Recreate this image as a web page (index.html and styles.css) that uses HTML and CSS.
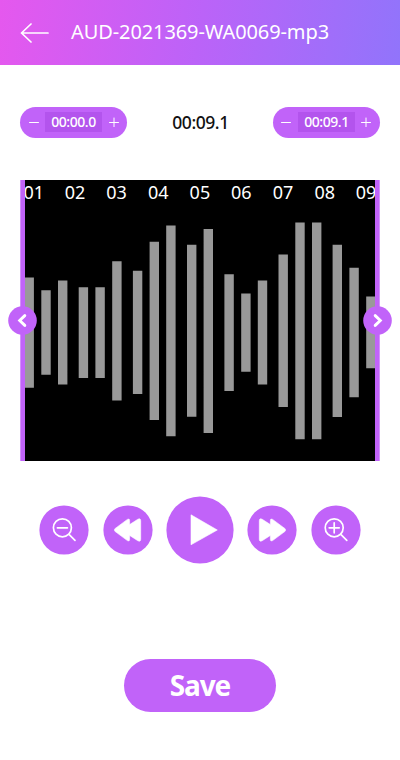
FILE: index.html
```html
<!DOCTYPE html>
<html lang="en">
<head>
<meta charset="utf-8">
<title>Audio trimmer</title>
<link rel="stylesheet" href="styles.css">
</head>
<body>
<header class="topbar">
  <svg class="back" viewBox="0 0 30 20" width="30" height="20"><path d="M28 10H1.5M11 1L1.5 10L11 19"/></svg>
  <h1 class="title">AUD-2021369-WA0069-mp3</h1>
</header>
<main>
  <section class="times">
    <div class="stepper">
      <svg class="sign" viewBox="0 0 10 10" width="10" height="10"><path d="M.5 5.5h9"/></svg>
      <span class="value">00:00.0</span>
      <svg class="sign" viewBox="0 0 10 10" width="10" height="10"><path d="M.5 5.5h9M5 1v9"/></svg>
    </div>
    <span class="duration">00:09.1</span>
    <div class="stepper">
      <svg class="sign" viewBox="0 0 10 10" width="10" height="10"><path d="M.5 5.5h9"/></svg>
      <span class="value">00:09.1</span>
      <svg class="sign" viewBox="0 0 10 10" width="10" height="10"><path d="M.5 5.5h9M5 1v9"/></svg>
    </div>
  </section>
  <section class="wave">
    <svg class="chart" viewBox="20 179.7 360 281.6" width="360" height="281.6">
      <path class="backdrop" d="M24 179.7h352v281.6h-352z"/>
      <g class="ticks">
        <text x="23.5" y="198.4" textLength="20.6" lengthAdjust="spacingAndGlyphs">01</text>
        <text x="64.8" y="198.4" textLength="20.6" lengthAdjust="spacingAndGlyphs">02</text>
        <text x="106.3" y="198.4" textLength="20.6" lengthAdjust="spacingAndGlyphs">03</text>
        <text x="148" y="198.4" textLength="20.6" lengthAdjust="spacingAndGlyphs">04</text>
        <text x="189.6" y="198.4" textLength="20.6" lengthAdjust="spacingAndGlyphs">05</text>
        <text x="231" y="198.4" textLength="20.6" lengthAdjust="spacingAndGlyphs">06</text>
        <text x="272.7" y="198.4" textLength="20.6" lengthAdjust="spacingAndGlyphs">07</text>
        <text x="314.4" y="198.4" textLength="20.6" lengthAdjust="spacingAndGlyphs">08</text>
        <text x="355.8" y="198.4" textLength="20.6" lengthAdjust="spacingAndGlyphs">09</text>
      </g>
      <path class="bars" d="M24.5 277.3h9.4v110.2h-9.4zM41.3 290h9.4v84.5h-9.4zM58 280.3h9.4v104h-9.4zM78.7 287h9.4v90.7h-9.4zM95.4 287h9.4v90.7h-9.4zM112.2 261h9.4v139.3h-9.4zM132.9 270.4h9.4v123.3h-9.4zM149.6 241.4h9.4v178.4h-9.4zM166.2 225.3h9.4v210.7h-9.4zM187 244.5h9.4v172h-9.4zM203.6 228.6h9.4v204.1h-9.4zM224.4 274h9.4v116.6h-9.4zM241.2 293.2h9.4v78.2h-9.4zM257.8 280.3h9.4v104h-9.4zM278.5 254.3h9.4v152.5h-9.4zM295.3 222.2h9.4v216.8h-9.4zM312 222.2h9.4v216.8h-9.4zM332.6 244.4h9.4v172.2h-9.4zM349.4 267.4h9.4v129.6h-9.4zM366.2 296.3h9.4v71.7h-9.4z"/>
      <path class="edge" d="M20.3 179.7h4.7v281.6h-4.7zM375 179.7h4.7v281.6h-4.7z"/>
    </svg>
    <svg class="handle start" viewBox="0 0 29 29" width="29" height="29"><circle cx="14.5" cy="14.5" r="14.3"/><path d="M16.8 9.6L11.7 14.5L16.8 19.4"/></svg>
    <svg class="handle end" viewBox="0 0 29 29" width="29" height="29"><circle cx="14.5" cy="14.5" r="14.3"/><path d="M12.2 9.6L17.3 14.5L12.2 19.4"/></svg>
  </section>
  <section class="controls">
    <svg class="control" viewBox="0 0 50 50" width="50" height="50"><circle class="disc" cx="25" cy="25" r="24.6"/><path class="line" d="M32.4 22.8a9 9 0 1 1-18 0a9 9 0 1 1 18 0zM18.4 22.8h10M30 29.4L36 35.3"/></svg>
    <svg class="control" viewBox="0 0 50 50" width="50" height="50"><circle class="disc" cx="25" cy="25" r="24.6"/><path class="solid" d="M11.9 26.3Q10.9 25 11.9 23.7L24.4 14.4Q26.6 13.2 26.6 15.4V19.6L34.9 14.2Q37.7 12.9 37.7 15.8V34.2Q37.7 37.1 34.9 35.8L26.6 30.4V34.6Q26.6 36.8 24.4 35.6Z"/></svg>
    <svg class="control" viewBox="0 0 68 68" width="68" height="68"><circle class="disc" cx="34" cy="34" r="33.6"/><path class="solid" d="M25 18.8L51.3 34L25 48.8Z"/></svg>
    <svg class="control" viewBox="0 0 50 50" width="50" height="50"><circle class="disc" cx="25" cy="25" r="24.6"/><path class="solid" d="M38.1 26.3Q39.1 25 38.1 23.7L25.6 14.4Q23.4 13.2 23.4 15.4V19.6L15.1 14.2Q12.3 12.9 12.3 15.8V34.2Q12.3 37.1 15.1 35.8L23.4 30.4V34.6Q23.4 36.8 25.6 35.6Z"/></svg>
    <svg class="control" viewBox="0 0 50 50" width="50" height="50"><circle class="disc" cx="25" cy="25" r="24.6"/><path class="line" d="M32.2 22.8a9 9 0 1 1-18 0a9 9 0 1 1 18 0zM18.2 22.8h10M23.2 17.8v10M29.8 29.4L35.8 35.3"/></svg>
  </section>
  <button class="save">Save</button>
</main>
</body>
</html>
```
FILE: styles.css
```css
* { box-sizing: border-box; }

body {
  margin: 0;
  width: 400px;
  height: 760px;
  background: #fff;
  font-family: "Noto Sans", sans-serif;
}

svg { display: block; flex: none; }

.topbar {
  display: flex;
  align-items: center;
  gap: 21px;
  height: 65.3px;
  padding-left: 20px;
  background: linear-gradient(98deg, #e558ee 0%, #bb63f8 50%, #9174fb 100%);
}

.back, .sign {
  fill: none;
  stroke: #fff;
  stroke-linecap: round;
  stroke-linejoin: round;
}
.back { stroke-width: 1.7; }
.sign { stroke-width: 1; }

.title {
  margin: 0 0 1px;
  color: #fff;
  font-size: 20px;
  font-weight: 400;
  line-height: 28px;
  letter-spacing: -0.1px;
  white-space: nowrap;
}

.times {
  display: flex;
  align-items: center;
  justify-content: space-between;
  margin: 41.4px 20px 0;
  height: 31.6px;
}

.stepper {
  display: flex;
  align-items: center;
  justify-content: space-between;
  width: 107px;
  height: 31.6px;
  padding: 0 8.5px;
  border-radius: 16px;
  background: #c163f9;
  color: #fff;
}

.value {
  width: 57px;
  height: 20px;
  background: #b354ed;
  font-size: 14px;
  font-weight: 500;
  line-height: 20px;
  letter-spacing: -0.45px;
  text-align: center;
}

.duration {
  padding-left: 1px;
  color: #111;
  font-size: 17.5px;
  font-weight: 500;
  line-height: 24px;
  letter-spacing: -0.45px;
}

.wave {
  position: relative;
  width: 360px;
  height: 281.6px;
  margin: 41.4px 20px 0;
}

.backdrop { fill: #000; }
.ticks { fill: #fff; font-size: 18.3px; }
.bars { fill: #999; }
.edge, .handle circle, .disc { fill: #c163f9; }

.handle {
  position: absolute;
  top: 126.3px;
  fill: none;
}
.handle path {
  stroke: #fff;
  stroke-width: 2.9;
  stroke-linecap: round;
}
.start { left: -12px; }
.end { right: -12px; }

.controls {
  display: flex;
  align-items: center;
  justify-content: center;
  gap: 13.4px;
  margin-top: 34.4px;
}
.line {
  fill: none;
  stroke: #fff;
  stroke-width: 1.7;
  stroke-linecap: round;
}
.solid {
  fill: #fff;
  stroke: #fff;
  stroke-width: 0.6;
  stroke-linejoin: round;
}

.save {
  display: block;
  width: 152px;
  height: 52.6px;
  margin: 95.3px auto 0;
  padding: 0;
  border: 0;
  border-radius: 27px;
  background: #c163f9;
  color: #fff;
  font: 700 28px/52px "Noto Sans", sans-serif;
  letter-spacing: -1.1px;
}
```
